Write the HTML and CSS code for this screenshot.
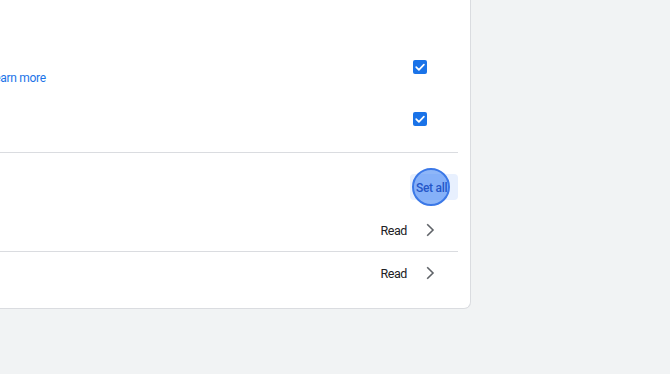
FILE: index.html
```html
<!DOCTYPE html>
<html lang="en">
<head>
  <meta charset="UTF-8" />
  <title>Site settings</title>
  <link rel="stylesheet" href="styles.css">
</head>
<body>

  <div class="card">

    <div class="section">
      <div class="row">
        <div class="row-text"><a class="link" href="#">Learn more</a></div>
        <span class="checkbox">
          <svg viewBox="0 0 14 14" width="14" height="14"><path d="M3.2 7.2 L5.9 9.8 L10.9 4.6" fill="none" stroke="#fff" stroke-width="1.7" stroke-linecap="round" stroke-linejoin="round"/></svg>
        </span>
      </div>
      <div class="row">
        <div class="row-text"></div>
        <span class="checkbox">
          <svg viewBox="0 0 14 14" width="14" height="14"><path d="M3.2 7.2 L5.9 9.8 L10.9 4.6" fill="none" stroke="#fff" stroke-width="1.7" stroke-linecap="round" stroke-linejoin="round"/></svg>
        </span>
      </div>
    </div>

    <div class="set-row">
      <button class="set-btn">
        <span class="click-dot"></span>
        <span class="set-label">Set all</span>
      </button>
    </div>

    <div class="read-row bordered">
      <span class="read">Read</span>
      <svg class="chevron" viewBox="0 0 24 24" width="24" height="24"><path d="M9.2 6.2 L15 12 L9.2 17.8" fill="none" stroke="#5f6368" stroke-width="1.6"/></svg>
    </div>
    <div class="read-row">
      <span class="read">Read</span>
      <svg class="chevron" viewBox="0 0 24 24" width="24" height="24"><path d="M9.2 6.2 L15 12 L9.2 17.8" fill="none" stroke="#5f6368" stroke-width="1.6"/></svg>
    </div>

  </div>

</body>
</html>
```

FILE: styles.css
```css
body {
  margin: 0;
  background: #f1f3f4;
  font-family: Roboto, "Liberation Sans", sans-serif;
  color: #202124;
  overflow: hidden;
}
.card {
  width: 621px;
  margin-left: -150px;
  height: 309px;
  box-sizing: border-box;
  background: #fff;
  border-right: 1px solid #dadce0;
  border-bottom: 1px solid #dadce0;
  border-bottom-right-radius: 7px;
  padding: 0 12px 0 138px;
}
.section {
  padding: 41px 0 7px 0;
  border-bottom: 1px solid #dadce0;
}
.row {
  height: 52px;
  display: flex;
  align-items: center;
  padding-right: 31px;
}
.row-text {
  flex-grow: 1;
  padding-top: 22px;
  font-size: 12px;
  letter-spacing: -0.3px;
}
.link {
  color: #1a73e8;
  text-decoration: none;
}
.checkbox {
  width: 14px;
  height: 14px;
  border-radius: 2px;
  background: #1a73e8;
  display: flex;
}
.set-row {
  display: flex;
  justify-content: flex-end;
  padding: 21px 0 9px 0;
}
.set-btn {
  position: relative;
  height: 26px;
  width: 48px;
  padding: 0 0 0 6px;
  border: none;
  border-radius: 4px;
  background: #e8f0fe;
  font-family: Roboto, "Liberation Sans", sans-serif;
  text-align: left;
}
.set-label {
  position: relative;
  color: #2456c8;
  font-size: 12px;
  font-weight: 500;
  letter-spacing: -0.3px;
}
.click-dot {
  position: absolute;
  left: 2px;
  top: -6px;
  width: 38px;
  height: 38px;
  box-sizing: border-box;
  border-radius: 50%;
  background: rgba(66, 133, 244, 0.6);
  border: 2px solid #3b78e7;
}
.read-row {
  height: 42px;
  display: flex;
  align-items: center;
  justify-content: flex-end;
  padding-right: 16px;
}
.read-row.bordered {
  border-bottom: 1px solid #dadce0;
}
.read {
  font-size: 12.5px;
  letter-spacing: -0.4px;
  margin-right: 11px;
}
.chevron {
  display: block;
}
```
